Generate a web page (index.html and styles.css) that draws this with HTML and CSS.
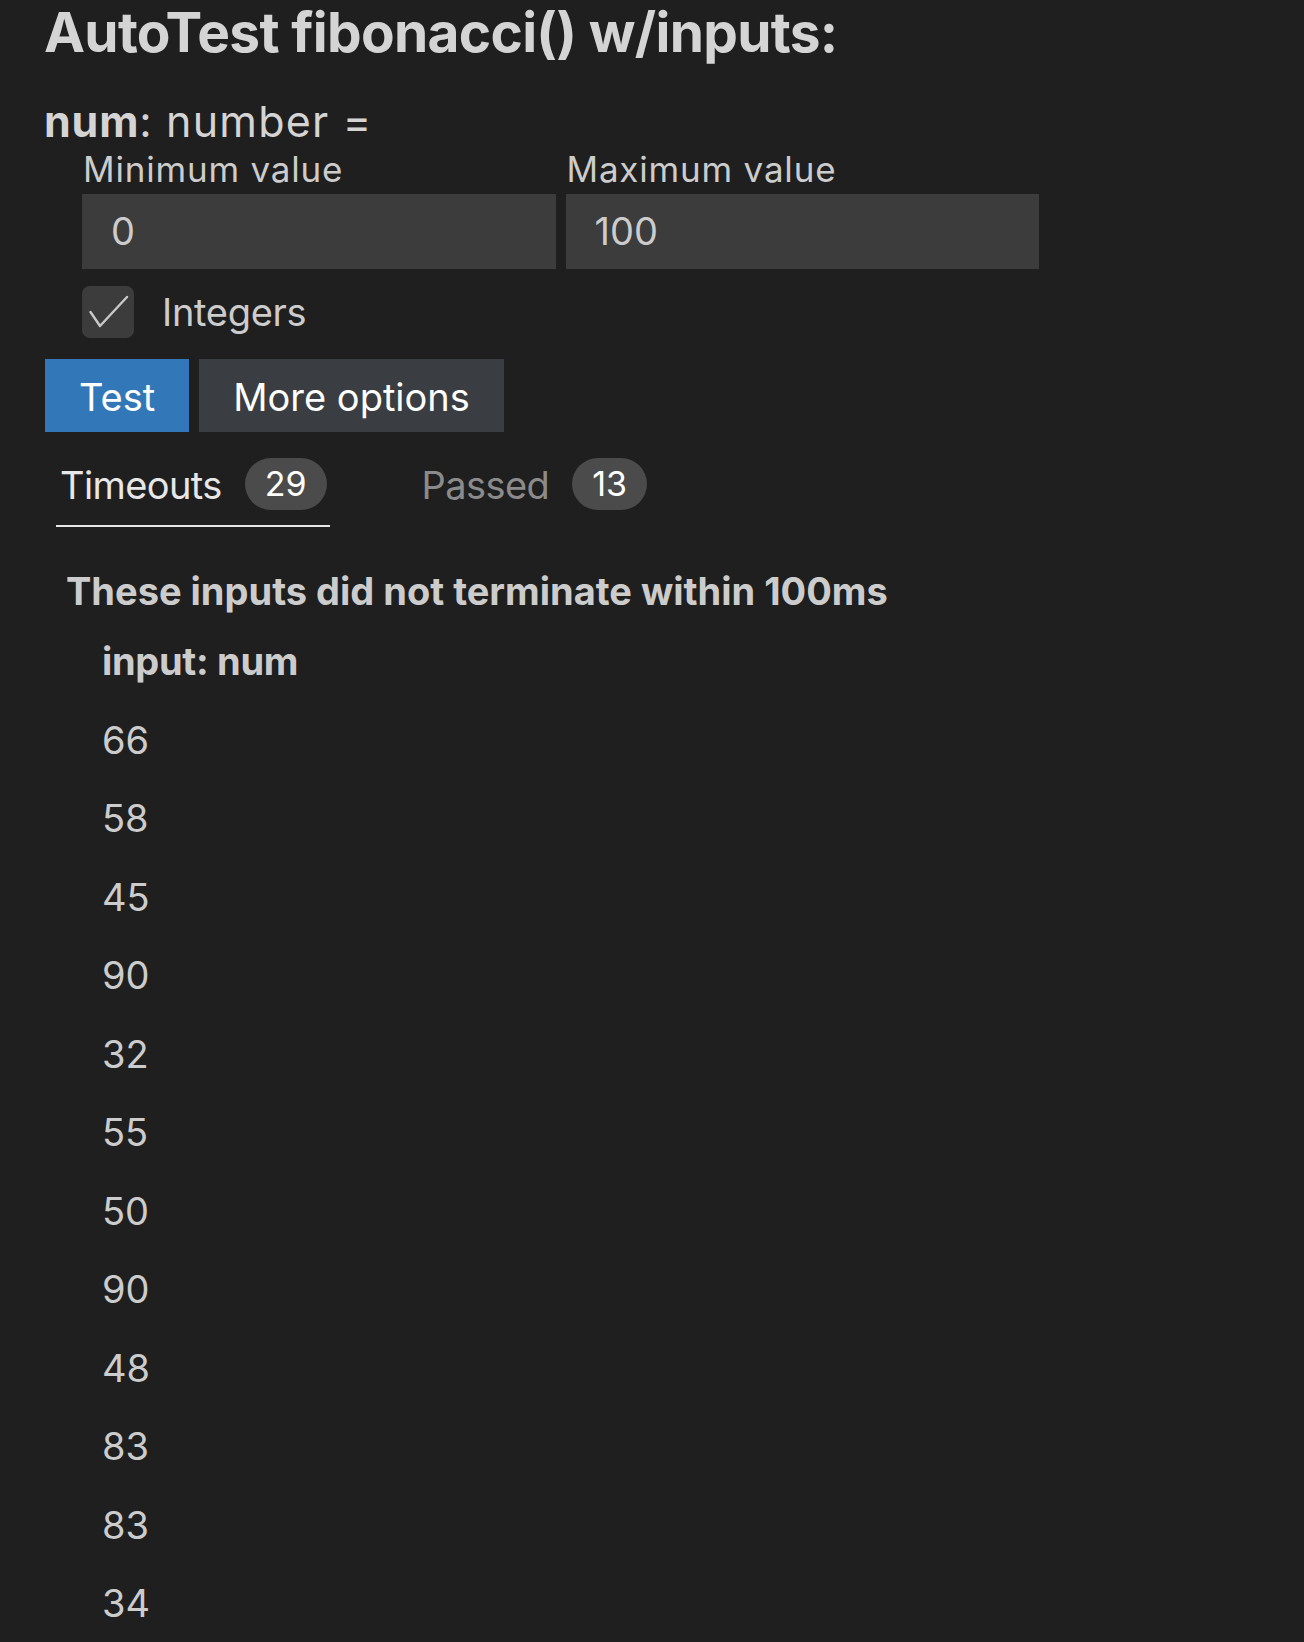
FILE: index.html
```html
<!DOCTYPE html>
<html lang="en">
<head>
<meta charset="utf-8">
<title>AutoTest fibonacci()</title>
<link rel="stylesheet" href="styles.css">
</head>
<body>
<main class="page">
  <h1 class="title">AutoTest fibonacci() w/inputs:</h1>
  <div class="param"><strong>num</strong>: number =</div>
  <div class="range">
    <label class="field">
      <span class="field-label">Minimum value</span>
      <span class="field-input">0</span>
    </label>
    <label class="field">
      <span class="field-label">Maximum value</span>
      <span class="field-input">100</span>
    </label>
  </div>
  <div class="check-row">
    <span class="checkbox">
      <svg width="52" height="52" viewBox="0 0 52 52"><path d="M8.5 26 L18 40 L45 11" fill="none" stroke="#c8c8c8" stroke-width="2.4" stroke-linecap="round" stroke-linejoin="round"/></svg>
    </span>
    <span class="check-label">Integers</span>
  </div>
  <div class="buttons">
    <button class="btn btn-primary">Test</button>
    <button class="btn btn-secondary">More options</button>
  </div>
  <div class="tabs">
    <div class="tab tab-active"><span class="tab-label">Timeouts</span><span class="badge">29</span></div>
    <div class="tab"><span class="tab-label">Passed</span><span class="badge">13</span></div>
  </div>
  <section class="panel">
    <h2 class="panel-title">These inputs did not terminate within 100ms</h2>
    <table class="results">
      <thead><tr><th>input: num</th></tr></thead>
      <tbody>
        <tr><td>66</td></tr>
        <tr><td>58</td></tr>
        <tr><td>45</td></tr>
        <tr><td>90</td></tr>
        <tr><td>32</td></tr>
        <tr><td>55</td></tr>
        <tr><td>50</td></tr>
        <tr><td>90</td></tr>
        <tr><td>48</td></tr>
        <tr><td>83</td></tr>
        <tr><td>83</td></tr>
        <tr><td>34</td></tr>
      </tbody>
    </table>
  </section>
</main>
</body>
</html>
```
FILE: styles.css
```css
html, body {
  margin: 0;
  padding: 0;
  background: #1f1f1f;
  overflow: hidden;
}
body {
  font-family: Inter, "Noto Sans", sans-serif;
  color: #cccccc;
  font-size: 38px;
}
.page {
  padding: 0 0 0 44px;
  width: 1260px;
  height: 1642px;
  overflow: hidden;
}
.title {
  margin: 0;
  font-size: 55px;
  line-height: 64px;
  font-weight: 700;
  color: #d4d4d4;
  letter-spacing: -0.7px;
}
.param {
  margin-top: 33px;
  font-size: 43px;
  line-height: 48px;
  letter-spacing: 1.2px;
  color: #d4d4d4;
}
.param strong { font-weight: 700; letter-spacing: 0.8px; }
.range {
  display: flex;
  gap: 10px;
  margin-left: 38px;
  width: 957px;
  margin-top: 4px;
}
.field {
  flex: 1;
  display: flex;
  flex-direction: column;
}
.field-label {
  font-size: 35px;
  line-height: 40px;
  letter-spacing: 0.8px;
  padding-left: 1px;
  color: #cccccc;
}
.field-input {
  margin-top: 5px;
  height: 75px;
  line-height: 75px;
  background: #3c3c3c;
  padding-left: 29px;
  color: #cccccc;
}
.check-row {
  display: flex;
  align-items: center;
  margin-top: 17px;
  margin-left: 38px;
  height: 52px;
}
.checkbox {
  width: 52px;
  height: 52px;
  border-radius: 8px;
  background: #3c3c3c;
  display: block;
}
.checkbox svg { display: block; }
.check-label {
  margin-left: 28px;
  line-height: 52px;
  letter-spacing: -0.3px;
  color: #cccccc;
}
.buttons {
  display: flex;
  gap: 10px;
  margin-top: 21px;
  margin-left: 1px;
}
.btn {
  border: 0;
  font-family: inherit;
  font-size: 38px;
  height: 73px;
  line-height: 73px;
  padding: 2px 34px 0;
  color: #ffffff;
}
.btn-primary { background: #3277b7; }
.btn-secondary { background: #3a3d41; }
.tabs {
  display: flex;
  margin-top: 26px;
  margin-left: 12px;
}
.tab {
  display: flex;
  align-items: center;
  height: 52px;
  padding: 0 3px 15px 4px;
  border-bottom: 2px solid transparent;
  color: #8b8b8b;
}
.tab + .tab { margin-left: 88px; }
.tab-active {
  color: #e7e7e7;
  border-bottom-color: #e7e7e7;
}
.tab-label {
  line-height: 52px;
  padding-top: 2px;
  letter-spacing: -0.6px;
}
.badge {
  margin-left: 23px;
  height: 52px;
  line-height: 52px;
  border-radius: 26px;
  background: #4b4b4b;
  color: #ffffff;
  font-size: 34px;
  padding: 0 20px;
}
.panel {
  margin-left: 22px;
  margin-top: 40px;
}
.panel-title {
  margin: 0;
  font-size: 38px;
  line-height: 48px;
  font-weight: 700;
  color: #cccccc;
}
.results {
  border-collapse: collapse;
  margin-top: 7px;
  margin-left: 36px;
}
.results th, .results td {
  padding: 0;
  height: 78.5px;
  line-height: 78.5px;
  text-align: left;
  font-size: 38px;
  color: #cccccc;
}
.results th { font-weight: 700; letter-spacing: -0.3px; }
.results td { font-weight: 400; }
```
